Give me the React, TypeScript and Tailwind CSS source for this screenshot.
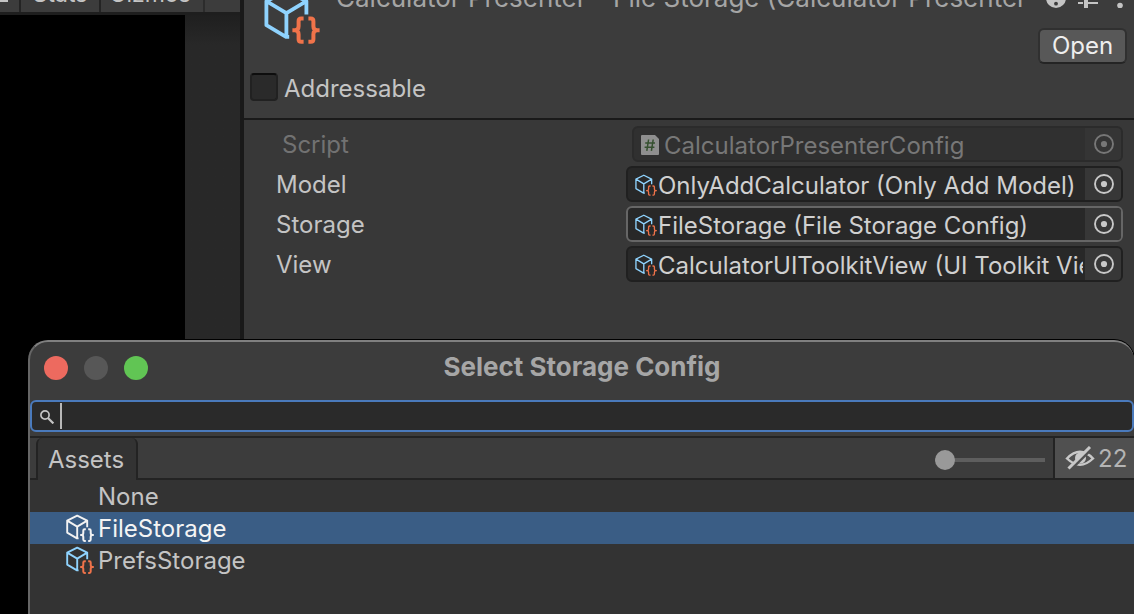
import { useState } from "react";

type AssetIconProps = { className: string; mono?: boolean; thin?: boolean };

function AssetIcon({ className, mono = false, thin = false }: AssetIconProps) {
  const cube = mono ? "#f2f2f2" : "#8fd3fe";
  const braces = mono ? "#f2f2f2" : "#f0734a";
  const weight = thin ? 1.7 : 1.9;
  return (
    <svg viewBox="0 0 28 28" className={className} fill="none" aria-hidden="true">
      <path
        d="M21.2 13.2V6.6L11.2 1.6L1.2 6.6V18.6L11 24.4H12.6M1.2 6.6L11.2 12.6L21.2 6.6M11.2 12.6V24.4"
        stroke={cube}
        strokeWidth={weight}
        strokeLinejoin="round"
      />
      <path
        d="M19.8 15.3H18.6Q17.3 15.3 17.3 16.6V19.1Q17.3 21.1 15.4 21.1H14.2H15.4Q17.3 21.1 17.3 23.1V25.6Q17.3 26.9 18.6 26.9H19.8M22.2 15.3H23.4Q24.7 15.3 24.7 16.6V19.1Q24.7 21.1 26.6 21.1H27.8H26.6Q24.7 21.1 24.7 23.1V25.6Q24.7 26.9 23.4 26.9H22.2"
        stroke={braces}
        strokeWidth={thin ? 1.7 : 2}
      />
    </svg>
  );
}

function ScriptIcon() {
  return (
    <svg viewBox="0 0 18 20" className="mt-0.5 h-5 w-[18px] shrink-0" aria-hidden="true">
      <path d="M1 0H14L18 4V19Q18 20 17 20H1Q0 20 0 19V1Q0 0 1 0Z" fill="#8f8f8f" />
      <path d="M7.6 4.5L5.8 15.8M12.2 4.5L10.4 15.8M4.2 8H14M3.6 12.3H13.4" stroke="#35502f" strokeWidth="1.5" />
    </svg>
  );
}

function PickerIcon() {
  return (
    <svg viewBox="0 0 20 20" className="size-5" aria-hidden="true">
      <circle cx="10" cy="10" r="9" fill="none" stroke="currentColor" strokeWidth="1.9" />
      <circle cx="10" cy="10" r="3.1" fill="currentColor" />
    </svg>
  );
}

type Field = { id: string; label: string; value: string; state?: "disabled" | "active" };

const fields: Field[] = [
  { id: "script", label: "Script", value: "CalculatorPresenterConfig", state: "disabled" },
  { id: "model", label: "Model", value: "OnlyAddCalculator (Only Add Model)" },
  { id: "storage", label: "Storage", value: "FileStorage (File Storage Config)", state: "active" },
  { id: "view", label: "View", value: "CalculatorUIToolkitView (UI Toolkit View Config)" },
];

function ObjectField({ id, label, value, state }: Field) {
  const disabled = state === "disabled";
  const tone = disabled
    ? "border-[#2b2b2b] bg-[#303030] text-[#777777]"
    : state === "active"
      ? "border-[#666666] bg-[#282828] text-[#d0d0d0]"
      : "border-[#202020] bg-[#282828] text-[#d0d0d0]";
  return (
    <div className={disabled ? "flex items-center pl-[38px]" : "flex items-center pl-8"}>
      <label htmlFor={id} className={disabled ? "w-[350px] shrink-0 pt-0.5 text-[#727272]" : "w-[350px] shrink-0 pt-0.5 text-[#c4c4c4]"}>
        {label}
      </label>
      <div className={`flex h-9 min-w-0 flex-1 items-center overflow-hidden rounded-md border-2 pl-[7px] ${tone}`}>
        {disabled ? <ScriptIcon /> : <AssetIcon thin className="mt-0.5 size-[22px] shrink-0" />}
        <input
          id={id}
          readOnly
          disabled={disabled}
          value={value}
          className={disabled ? "ml-[5px] min-w-0 flex-1 bg-transparent pt-1 outline-none" : "ml-px min-w-0 flex-1 bg-transparent pt-1 outline-none"}
        />
        <button
          type="button"
          disabled={disabled}
          aria-label={`Pick ${label}`}
          className={disabled ? "ml-0.5 flex h-8 w-9 shrink-0 items-center justify-center bg-[#353535] pl-0.5" : "ml-0.5 flex h-8 w-9 shrink-0 items-center justify-center bg-[#373737] pl-0.5 text-[#c8c8c8]"}
        >
          <PickerIcon />
        </button>
      </div>
    </div>
  );
}

function GameView() {
  return (
    <section className="flex w-60 shrink-0 flex-col bg-[#282828]">
      <div className="flex h-3 items-end overflow-hidden bg-[#3c3c3c] text-[23px] leading-7 text-[#c4c4c4]">
        <div className="flex h-3 w-[21px] items-start border-r-2 border-[#242424]">
          <span className="h-0.5 w-2 bg-[#c4c4c4]" />
        </div>
        <button type="button" className="w-20 border-r-2 border-[#242424] pb-1">Stats</button>
        <button type="button" className="w-[104px] border-r-2 border-[#2c2c2c] pr-1 pb-1">Gizmos</button>
      </div>
      <div className="h-[3px] bg-[#1e1e1e]" />
      <div className="flex flex-1">
        <div className="w-[185px] bg-black" />
        <div className="flex-1 bg-linear-to-b from-[#1f1f1f] to-[#282828] to-5%" />
      </div>
    </section>
  );
}

function Inspector() {
  const [addressable, setAddressable] = useState(false);
  return (
    <section className="min-w-0 flex-1 border-l-4 border-[#191919] bg-[#383838]">
      <header className="h-[120px] overflow-hidden border-b-2 border-[#1a1a1a] bg-[#3c3c3c]">
        <div className="-mt-3 flex items-start pl-5">
          <AssetIcon className="size-14 shrink-0" />
          <div className="min-w-0 flex-1">
            <div className="flex h-10 items-start pl-4">
              <h1 className="-mt-1.5 min-w-0 flex-1 truncate text-[26px] leading-8 text-[#a5a5a5]">
                Calculator Presenter - File Storage (Calculator Presenter
              </h1>
              <svg viewBox="-6 0 90 20" className="h-5 w-[90px] shrink-0 text-[#c4c4c4]" aria-hidden="true">
                <circle cx="6" cy="10" r="10" fill="currentColor" />
                <path d="M3.5 7.5A2.8 2.8 0 1 1 7.5 10Q6 10.8 6 12" fill="none" stroke="#3c3c3c" strokeWidth="2" />
                <circle cx="6" cy="15.7" r="1.9" fill="#3c3c3c" />
                <path d="M28 5H48M28 15H33M36 15H48" stroke="currentColor" strokeWidth="2" />
                <path d="M36 0V20" stroke="currentColor" strokeWidth="4" />
                <circle cx="70" cy="17.5" r="2.8" fill="currentColor" />
                <circle cx="70" cy="9" r="2.8" fill="currentColor" />
              </svg>
            </div>
            <div className="flex justify-end pr-[7px]">
              <button type="button" className="h-9 w-[89px] rounded-md border-2 border-[#303030] border-b-[#242424] bg-[#585858] leading-7 text-[#eeeeee]">
                Open
              </button>
            </div>
          </div>
        </div>
        <div className="mt-[5px] flex items-center gap-1.5 pl-1.5">
          <input
            id="addressable"
            type="checkbox"
            checked={addressable}
            onChange={(e) => setAddressable(e.target.checked)}
            className="size-7 appearance-none rounded border-2 border-[#212121] border-t-[#0d0d0d] bg-[#2a2a2a] checked:bg-[#4a4a4a]"
          />
          <label htmlFor="addressable" className="pt-1 text-[#c4c4c4]">Addressable</label>
        </div>
      </header>
      <div className="flex flex-col gap-1 pt-1.5 pr-[11px]">
        {fields.map((field) => (
          <ObjectField key={field.id} {...field} />
        ))}
      </div>
    </section>
  );
}

const assets = ["None", "FileStorage", "PrefsStorage"];

function SelectorWindow() {
  const [selected, setSelected] = useState("FileStorage");
  const [size, setSize] = useState(0);
  return (
    <section
      role="dialog"
      aria-labelledby="selector-title"
      className="absolute top-[340px] right-0 bottom-0 left-7 flex flex-col overflow-hidden rounded-t-[20px] border-t-2 border-l-2 border-t-[#808080] border-l-[#666666] bg-[#3c3c3c] shadow-[0_0_0_1px_#000000]"
    >
      <div className="grid h-[58px] shrink-0 grid-cols-[1fr_auto_1fr] items-center">
        <div className="flex gap-4 pb-1.5 pl-3.5">
          <button type="button" aria-label="Close" className="size-6 rounded-full bg-[#ed6a5f]" />
          <button type="button" aria-label="Minimize" disabled className="size-6 rounded-full bg-[#575757]" />
          <button type="button" aria-label="Zoom" className="size-6 rounded-full bg-[#61c554]" />
        </div>
        <h2 id="selector-title" className="pb-2 text-[26px] leading-8 font-bold text-[#a6a6a6]">
          Select Storage Config
        </h2>
      </div>
      <label className="flex h-8 shrink-0 items-center rounded-md border-2 border-[#4a7abc] bg-[#2a2a2a] pl-2">
        <svg viewBox="0 0 14 14" className="mt-0.5 size-3.5 shrink-0" fill="none" stroke="#c4c4c4" aria-hidden="true">
          <circle cx="5" cy="5" r="4.1" strokeWidth="1.7" />
          <path d="M8 8L13.4 13.4" strokeWidth="2.2" />
        </svg>
        <span className="ml-1.5 h-[26px] w-0.5 shrink-0 bg-[#b8b8b8]" />
        <input type="text" aria-label="Search" className="h-7 min-w-0 flex-1 bg-transparent text-[#d0d0d0] outline-none" />
      </label>
      <div className="mt-1 flex h-11 shrink-0 border-t-2 border-[#232323]">
        <div className="w-1.5 border-b-2 border-[#232323]" />
        <button type="button" className="w-[102px] rounded-t-md border-x-2 border-[#232323] bg-[#333333] pt-0.5 pr-0.5 text-[#c4c4c4]">
          Assets
        </button>
        <div className="flex flex-1 items-center justify-end border-b-2 border-[#232323] pr-2">
          <input
            type="range"
            min={0}
            max={100}
            value={size}
            aria-label="Icon size"
            onChange={(e) => setSize(Number(e.target.value))}
            className="mt-1 h-5 w-[110px] appearance-none bg-transparent [&::-webkit-slider-runnable-track]:h-1 [&::-webkit-slider-runnable-track]:bg-[#5e5e5e] [&::-webkit-slider-thumb]:-mt-2 [&::-webkit-slider-thumb]:size-5 [&::-webkit-slider-thumb]:appearance-none [&::-webkit-slider-thumb]:rounded-full [&::-webkit-slider-thumb]:bg-[#999999]"
          />
        </div>
        <button type="button" aria-label="Hidden packages: 22" className="flex w-[81px] items-center gap-[3px] border-b-2 border-l-2 border-[#232323] bg-[#505050] pl-2.5 text-[#b4b4b4]">
          <svg viewBox="0 0 30 24" className="h-6 w-[30px] shrink-0" fill="none" stroke="#c8c8c8" aria-hidden="true">
            <path d="M2 12.5Q15 -1 28 12.5Q15 25 2 12.5Z" strokeWidth="2.4" />
            <circle cx="15.5" cy="12" r="5.5" fill="#c8c8c8" stroke="none" />
            <path d="M6 23.5L27 2.5" stroke="#505050" strokeWidth="2.6" />
            <path d="M3.500 22.500L25 1" strokeWidth="3" />
          </svg>
          <span className="pt-0.5">22</span>
        </button>
      </div>
      <ul className="min-h-0 flex-1 bg-[#333333]">
        {assets.map((name) => {
          const active = name === selected;
          return (
            <li key={name}>
              <button
                type="button"
                onClick={() => setSelected(name)}
                className={active ? "flex h-8 w-full items-center gap-1 bg-[#3a5d85] pl-9 text-[#f4f4f4]" : "flex h-8 w-full items-center gap-1 pl-9 text-[#c4c4c4]"}
              >
                {name === "None" ? <span className="size-7" /> : <AssetIcon mono={active} className="size-7" />}
                <span className="pt-0.5">{name}</span>
              </button>
            </li>
          );
        })}
      </ul>
    </section>
  );
}

export default function App() {
  return (
    <main className="relative flex min-h-screen overflow-hidden bg-black font-['Inter',sans-serif] text-2xl leading-8">
      <GameView />
      <Inspector />
      <SelectorWindow />
    </main>
  );
}
